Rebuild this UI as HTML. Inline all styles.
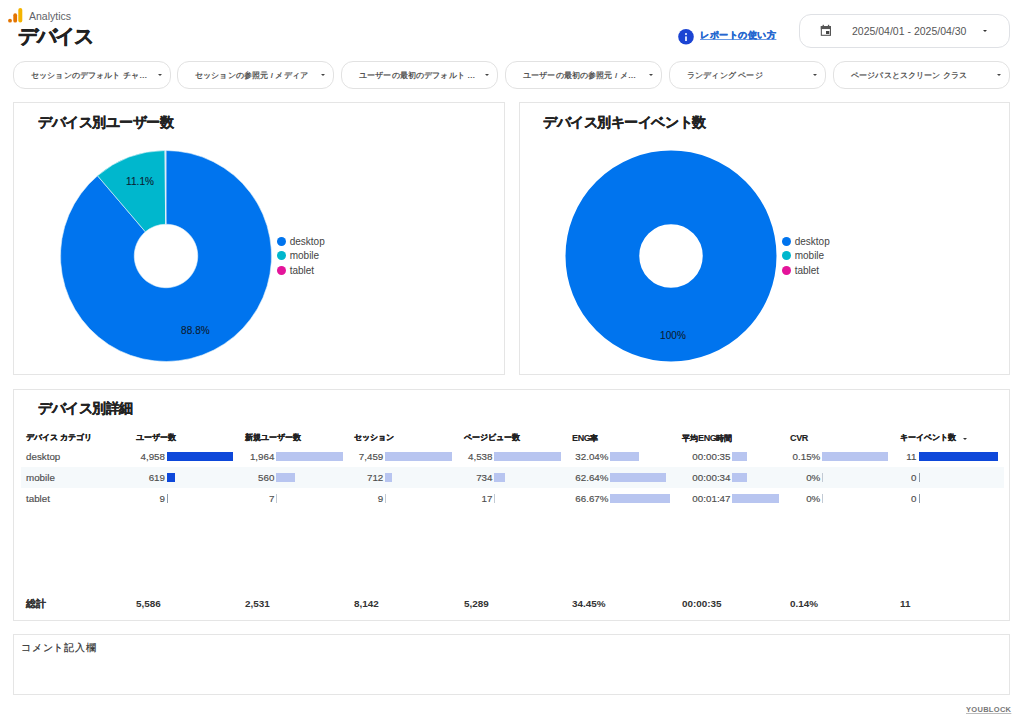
<!DOCTYPE html>
<html lang="ja">
<head>
<meta charset="utf-8">
<style>
*{box-sizing:border-box;margin:0;padding:0}
html,body{width:1024px;height:723px;overflow:hidden;background:#fff;font-family:"Liberation Sans",sans-serif;color:#333}
.a{position:absolute;white-space:nowrap;line-height:1}
.pill{position:absolute;top:61px;height:28px;border:1px solid #e2e2e2;border-radius:12px;background:#fff}
.pill .t{position:absolute;left:17px;top:7.6px;font-size:8px;font-weight:bold;color:#555;letter-spacing:0.15px}
.pill .arr{position:absolute;right:7.7px;top:11.8px;width:0;height:0;border-left:2px solid transparent;border-right:2px solid transparent;border-top:2px solid #444}
.card{position:absolute;border:1px solid #e5e5e5;background:#fff}
.ttl{position:absolute;font-size:14px;letter-spacing:-0.45px;font-weight:bold;color:#222;-webkit-text-stroke:0.3px #222;line-height:1;white-space:nowrap}
.leg{position:absolute;font-size:10px;color:#444;line-height:1;white-space:nowrap}
.leg i{display:inline-block;width:9.2px;height:9.2px;border-radius:50%;vertical-align:-1px;margin-right:3.5px}
.lbl{position:absolute;font-size:10px;letter-spacing:0.1px;color:#0c1c33;-webkit-text-stroke:0.1px #0c1c33;line-height:1;white-space:nowrap}
.th{position:absolute;top:433.5px;font-size:8px;font-weight:bold;color:#222;-webkit-text-stroke:0.25px #222;line-height:1;white-space:nowrap}
.v{position:absolute;font-size:9.8px;color:#4d4d4d;-webkit-text-stroke:0.15px #4d4d4d;line-height:1;white-space:nowrap;text-align:right}
.bar{position:absolute;height:9px}
.lt{font-size:9px;letter-spacing:-0.35px;-webkit-text-stroke:0.1px #222}
.tot{position:absolute;top:598.5px;font-size:9.9px;font-weight:bold;color:#333;line-height:1;white-space:nowrap}
</style>
</head>
<body>
<!-- header -->
<svg class="a" style="left:0;top:0" width="30" height="30" viewBox="0 0 30 30">
  <rect x="18.3" y="8" width="4" height="14.6" rx="2" fill="#f4b400"/>
  <rect x="13.3" y="13.3" width="3.8" height="9.3" rx="1.9" fill="#e37400"/>
  <circle cx="10" cy="20.7" r="1.9" fill="#e37400"/>
</svg>
<div class="a" style="left:29px;top:11px;font-size:10.5px;color:#5f6368">Analytics</div>
<div class="a" style="left:18px;top:25.9px;font-size:20px;letter-spacing:-1.3px;font-weight:bold;color:#222;-webkit-text-stroke:0.45px #222">デバイス</div>

<svg class="a" style="left:678px;top:29.3px" width="16" height="16" viewBox="0 0 16 16">
  <circle cx="8" cy="7.8" r="7.8" fill="#1b44d3"/>
  <circle cx="8" cy="5.1" r="1.05" fill="#e8f0ff"/>
  <rect x="7.1" y="7.4" width="1.8" height="4.6" fill="#e8f0ff"/>
</svg>
<div class="a" style="left:700px;top:31px;font-size:9px;letter-spacing:0.55px;font-weight:bold;color:#2767cf;-webkit-text-stroke:0.35px #2767cf;text-decoration:underline;text-decoration-color:#6b9be6">レポートの使い方</div>

<div class="a" style="left:799px;top:14px;width:211px;height:34px;border:1px solid #dfe1e5;border-radius:12px;background:#fff"></div>
<svg class="a" style="left:820px;top:24px" width="12" height="13" viewBox="0 0 12 13">
  <rect x="1.35" y="2.7" width="9.1" height="8.6" fill="none" stroke="#555" stroke-width="1.1"/>
  <rect x="0.8" y="2.15" width="10.2" height="2.9" fill="#555"/>
  <rect x="2.6" y="0.8" width="1.3" height="2" fill="#555"/>
  <rect x="7.9" y="0.8" width="1.3" height="2" fill="#555"/>
  <rect x="6" y="7" width="3.3" height="3" fill="#444"/>
</svg>
<div class="a" style="left:852px;top:25.5px;font-size:10.5px;color:#555">2025/04/01 - 2025/04/30</div>
<div class="a" style="left:983px;top:29.5px;width:0;height:0;border-left:2.5px solid transparent;border-right:2.5px solid transparent;border-top:2.5px solid #333"></div>

<!-- filters -->
<div class="pill" style="left:13px;width:158px"><span class="t">セッションのデフォルト チャ…</span><i class="arr"></i></div>
<div class="pill" style="left:177px;width:157px"><span class="t">セッションの参照元 / メディア</span><i class="arr"></i></div>
<div class="pill" style="left:341px;width:157px"><span class="t">ユーザーの最初のデフォルト …</span><i class="arr"></i></div>
<div class="pill" style="left:505px;width:157px"><span class="t">ユーザーの最初の参照元 / メ…</span><i class="arr"></i></div>
<div class="pill" style="left:669px;width:157px"><span class="t">ランディング ページ</span><i class="arr"></i></div>
<div class="pill" style="left:833px;width:177px"><span class="t">ページパスとスクリーン クラス</span><i class="arr"></i></div>

<!-- card 1 -->
<div class="card" style="left:13px;top:102px;width:492px;height:273px"></div>
<div class="ttl" style="left:38px;top:115px">デバイス別ユーザー数</div>
<svg class="a" style="left:60.4px;top:149.6px" width="212" height="212" viewBox="0 0 212 212">
  <path d="M106.00 0.50A105.5 105.5 0 1 1 37.52 25.74L85.39 81.85A31.75 31.75 0 1 0 106.00 74.25Z" fill="#0074ee" stroke="#e6f4f8" stroke-width="0.6"/>
  <path d="M37.52 25.74A105.5 105.5 0 0 1 104.93 0.51L105.68 74.25A31.75 31.75 0 0 0 85.39 81.85Z" fill="#00b7cd" stroke="#e6f4f8" stroke-width="0.6"/>
  <path d="M104.93 0.51A105.5 105.5 0 0 1 106.00 0.50L106.00 74.25A31.75 31.75 0 0 0 105.68 74.25Z" fill="#c9d6f2" stroke="#fff" stroke-width="0.4"/>
</svg>
<div class="lbl" style="left:126px;top:177px">11.1%</div>
<div class="lbl" style="left:181px;top:325.7px">88.8%</div>
<div class="leg" style="left:277px;top:236.5px"><i style="background:#0074ee"></i>desktop</div>
<div class="leg" style="left:277px;top:251px"><i style="background:#00b7cd"></i>mobile</div>
<div class="leg" style="left:277px;top:265.5px"><i style="background:#e4149a"></i>tablet</div>

<!-- card 2 -->
<div class="card" style="left:519px;top:102px;width:491px;height:273px"></div>
<div class="ttl" style="left:543px;top:115px">デバイス別キーイベント数</div>
<svg class="a" style="left:565.4px;top:149.55px" width="212" height="212" viewBox="0 0 212 212">
  <circle cx="106" cy="106" r="68.625" fill="none" stroke="#0074ee" stroke-width="73.75"/>
</svg>
<div class="lbl" style="left:660px;top:331px">100%</div>
<div class="leg" style="left:782px;top:236.5px"><i style="background:#0074ee"></i>desktop</div>
<div class="leg" style="left:782px;top:251px"><i style="background:#00b7cd"></i>mobile</div>
<div class="leg" style="left:782px;top:265.5px"><i style="background:#e4149a"></i>tablet</div>

<!-- table card -->
<div class="card" style="left:13px;top:389px;width:997px;height:232px"></div>
<div class="ttl" style="left:38px;top:401px">デバイス別詳細</div>
<div class="a" style="left:21px;top:467px;width:983px;height:21px;background:#f5f9fb"></div>
<div class="th" style="left:26px">デバイス カテゴリ</div>
<div class="th" style="left:136px">ユーザー数</div>
<div class="th" style="left:245px">新規ユーザー数</div>
<div class="th" style="left:354px">セッション</div>
<div class="th" style="left:464px">ページビュー数</div>
<div class="th" style="left:572px"><span class="lt">ENG</span>率</div>
<div class="th" style="left:682px">平均<span class="lt">ENG</span>時間</div>
<div class="th" style="left:790px"><span class="lt">CVR</span></div>
<div class="th" style="left:900px">キーイベント数</div>
<div class="a" style="left:962.5px;top:437.5px;width:0;height:0;border-left:2px solid transparent;border-right:2px solid transparent;border-top:2px solid #333"></div>

<!--ROWS-->
<div class="v" style="left:26px;top:452.0px;text-align:left">desktop</div>
<div class="v" style="left:26px;top:473.0px;text-align:left">mobile</div>
<div class="v" style="left:26px;top:494.0px;text-align:left">tablet</div>
<div class="v" style="right:859.0px;top:452.0px">4,958</div>
<div class="bar" style="left:167.0px;top:452.0px;width:66.4px;background:#0e48da"></div>
<div class="v" style="right:859.0px;top:473.0px">619</div>
<div class="bar" style="left:167.0px;top:473.0px;width:8.3px;background:#0e48da"></div>
<div class="v" style="right:859.0px;top:494.0px">9</div>
<div class="bar" style="left:167.0px;top:494.0px;width:1px;background:#8d9bab"></div>
<div class="v" style="right:749.6px;top:452.0px">1,964</div>
<div class="bar" style="left:276.2px;top:452.0px;width:66.6px;background:#b8c5f0"></div>
<div class="v" style="right:749.6px;top:473.0px">560</div>
<div class="bar" style="left:276.2px;top:473.0px;width:19.0px;background:#b8c5f0"></div>
<div class="v" style="right:749.6px;top:494.0px">7</div>
<div class="bar" style="left:276.2px;top:494.0px;width:1px;background:#c2cad4"></div>
<div class="v" style="right:640.7px;top:452.0px">7,459</div>
<div class="bar" style="left:385.2px;top:452.0px;width:66.6px;background:#b8c5f0"></div>
<div class="v" style="right:640.7px;top:473.0px">712</div>
<div class="bar" style="left:385.2px;top:473.0px;width:6.4px;background:#b8c5f0"></div>
<div class="v" style="right:640.7px;top:494.0px">9</div>
<div class="bar" style="left:385.2px;top:494.0px;width:1px;background:#c2cad4"></div>
<div class="v" style="right:531.5px;top:452.0px">4,538</div>
<div class="bar" style="left:494.4px;top:452.0px;width:66.5px;background:#b8c5f0"></div>
<div class="v" style="right:531.5px;top:473.0px">734</div>
<div class="bar" style="left:494.4px;top:473.0px;width:10.8px;background:#b8c5f0"></div>
<div class="v" style="right:531.5px;top:494.0px">17</div>
<div class="bar" style="left:494.4px;top:494.0px;width:1px;background:#c2cad4"></div>
<div class="v" style="right:415.5px;top:452.0px">32.04%</div>
<div class="bar" style="left:609.7px;top:452.0px;width:29.0px;background:#b8c5f0"></div>
<div class="v" style="right:415.5px;top:473.0px">62.64%</div>
<div class="bar" style="left:609.7px;top:473.0px;width:56.7px;background:#b8c5f0"></div>
<div class="v" style="right:415.5px;top:494.0px">66.67%</div>
<div class="bar" style="left:609.7px;top:494.0px;width:60.4px;background:#b8c5f0"></div>
<div class="v" style="right:293.5px;top:452.0px">00:00:35</div>
<div class="bar" style="left:732.1px;top:452.0px;width:15.4px;background:#b8c5f0"></div>
<div class="v" style="right:293.5px;top:473.0px">00:00:34</div>
<div class="bar" style="left:732.1px;top:473.0px;width:15.0px;background:#b8c5f0"></div>
<div class="v" style="right:293.5px;top:494.0px">00:01:47</div>
<div class="bar" style="left:732.1px;top:494.0px;width:47.1px;background:#b8c5f0"></div>
<div class="v" style="right:203.7px;top:452.0px">0.15%</div>
<div class="bar" style="left:822.2px;top:452.0px;width:66.3px;background:#b8c5f0"></div>
<div class="v" style="right:203.7px;top:473.0px">0%</div>
<div class="bar" style="left:822.2px;top:473.0px;width:1px;background:#c2cad4"></div>
<div class="v" style="right:203.7px;top:494.0px">0%</div>
<div class="bar" style="left:822.2px;top:494.0px;width:1px;background:#c2cad4"></div>
<div class="v" style="right:107.6px;top:452.0px">11</div>
<div class="bar" style="left:919.0px;top:452.0px;width:79.0px;background:#0e48da"></div>
<div class="v" style="right:107.6px;top:473.0px">0</div>
<div class="bar" style="left:919.0px;top:473.0px;width:1px;background:#8d9bab"></div>
<div class="v" style="right:107.6px;top:494.0px">0</div>
<div class="bar" style="left:919.0px;top:494.0px;width:1px;background:#8d9bab"></div>
<!--/ROWS-->
<div class="tot" style="left:26px;top:599px;font-size:10px;-webkit-text-stroke:0.1px #333">総計</div>
<div class="tot" style="left:136px">5,586</div>
<div class="tot" style="left:245px">2,531</div>
<div class="tot" style="left:354px">8,142</div>
<div class="tot" style="left:464px">5,289</div>
<div class="tot" style="left:572px">34.45%</div>
<div class="tot" style="left:682px">00:00:35</div>
<div class="tot" style="left:790px">0.14%</div>
<div class="tot" style="left:900px">11</div>

<!-- comment -->
<div class="card" style="left:13px;top:634px;width:997px;height:61px"></div>
<div class="a" style="left:21px;top:643px;font-size:10px;letter-spacing:0.75px;color:#333;-webkit-text-stroke:0.2px #333">コメント記入欄</div>
<div class="a" style="left:966px;top:705.5px;font-size:7.5px;letter-spacing:0.3px;font-weight:bold;color:#777;text-decoration:underline;text-decoration-color:#bbb">YOUBLOCK</div>
</body>
</html>
